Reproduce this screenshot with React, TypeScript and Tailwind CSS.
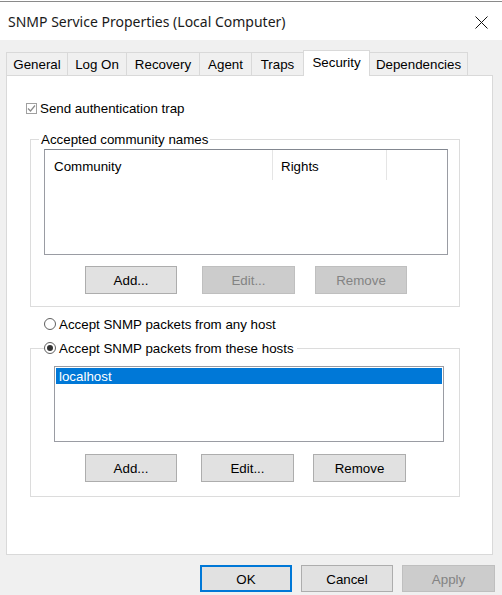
const tabs = [
  { label: "General", w: 62 },
  { label: "Log On", w: 59 },
  { label: "Recovery", w: 73 },
  { label: "Agent", w: 52 },
  { label: "Traps", w: 52 },
  { label: "Security", w: 66, active: true },
  { label: "Dependencies", w: 98 },
];

function Btn({
  label,
  w = 92,
  h = 28,
  disabled,
  primary,
  className = "",
}: {
  label: string;
  w?: number;
  h?: number;
  disabled?: boolean;
  primary?: boolean;
  className?: string;
}) {
  return (
    <div
      className={
        "flex shrink-0 items-center justify-center border pt-[2px] " +
        (disabled
          ? "border-[#bfbfbf] bg-[#cccccc] text-[#838383] "
          : primary
          ? "border-[#0078d7] bg-[#e1e1e1] text-black shadow-[inset_0_0_0_1px_#0078d7] "
          : "border-[#adadad] bg-[#e1e1e1] text-black ") +
        className
      }
      style={{ width: w, height: h }}
    >
      {label}
    </div>
  );
}

function Radio({ checked }: { checked?: boolean }) {
  return (
    <div className="flex h-[12px] w-[12px] items-center justify-center rounded-full border border-[#5f5f5f] bg-white">
      {checked && <div className="h-[6px] w-[6px] rounded-full bg-[#333333]" />}
    </div>
  );
}

export default function App() {
  return (
    <div
      className="h-[595px] w-[502px] overflow-hidden bg-[#f0f0f0] text-[13.33px] leading-none text-black"
      style={{ fontFamily: '"Liberation Sans", Arial, sans-serif' }}
    >
      {/* title bar */}
      <div className="bg-white pt-px">
        <div className="flex h-[39px] items-center justify-between border-t border-[#8a8a8a] pl-[8px] pr-[14px]">
          <span
            className="pt-[1px] text-[14px] text-[#1a1a1a]"
            style={{ fontFamily: '"Noto Sans", "Open Sans", sans-serif' }}
          >
            SNMP Service Properties (Local Computer)
          </span>
          <svg width="13" height="13" viewBox="0 0 13 13" className="mt-[2px]">
            <path d="M0.5 0.5 L12.5 12.5 M12.5 0.5 L0.5 12.5" stroke="#111" strokeWidth="1" />
          </svg>
        </div>
      </div>

      {/* tabs */}
      <div className="flex items-end pl-[6px] pt-[10px]">
        {tabs.map((t, i) => (
          <div
            key={t.label}
            className={
              "flex items-center justify-center border border-b-0 border-[#d9d9d9] " +
              (t.active
                ? "relative z-10 -mb-px h-[26px] bg-white pb-[2px]"
                : "h-[23px] bg-[#f0f0f0] pt-[2px]") +
              (i > 0 ? " -ml-px" : "")
            }
            style={{ width: t.w + (i > 0 ? 1 : 0) }}
          >
            {t.label}
          </div>
        ))}
      </div>

      {/* panel */}
      <div className="ml-[6px] h-[480px] w-[487px] border border-[#d9d9d9] bg-white">
        <div className="ml-[19px] mt-[24px] flex h-[16px] items-center">
          <div className="flex h-[11px] w-[11px] items-center justify-center border border-[#a0a0a0] bg-white">
            <svg width="9" height="9" viewBox="0 0 9 9">
              <path d="M1 4.5 L3.5 7 L8 1.5" fill="none" stroke="#8a8a8a" strokeWidth="1.2" />
            </svg>
          </div>
          <span className="ml-[3px] pt-[2px]">Send authentication trap</span>
        </div>

        {/* community group */}
        <div className="relative ml-[23px] mt-[23px] h-[168px] w-[430px] border border-[#dcdcdc]">
          <span className="absolute left-[8px] top-[-7px] bg-white px-[2px]">Accepted community names</span>
          <div className="ml-[13px] mt-[9px] h-[106px] w-[404px] border border-[#9a9ca3] border-t-[#828790] bg-white">
            <div className="flex h-[30px]">
              <div className="flex w-[228px] items-center border-r border-[#e5e5e5] pl-[9px] pt-[3px]">Community</div>
              <div className="flex w-[114px] items-center border-r border-[#e5e5e5] pl-[8px] pt-[3px]">Rights</div>
            </div>
          </div>
          <div className="ml-[54px] mt-[11px] flex">
            <Btn label="Add..." />
            <Btn label="Edit..." w={93} disabled className="ml-[25px]" />
            <Btn label="Remove" disabled className="ml-[20px]" />
          </div>
        </div>

        <div className="ml-[37px] mt-[9px] flex h-[16px] items-center">
          <Radio />
          <span className="ml-[3px] pt-[2px]">Accept SNMP packets from any host</span>
        </div>

        {/* hosts group */}
        <div className="relative ml-[23px] mt-[16px] h-[149px] w-[430px] border border-[#dcdcdc]">
          <div className="absolute left-[13px] top-[-9px] flex h-[16px] items-center bg-white pr-[3px]">
            <Radio checked />
            <span className="ml-[3px] pt-[2px]">Accept SNMP packets from these hosts</span>
          </div>
          <div className="ml-[23px] mt-[17px] h-[76px] w-[390px] border border-[#9a9ca3] bg-white p-px">
            <div className="flex h-[16px] items-center bg-[#0078d7] pl-[3px] pt-[2px] text-white">localhost</div>
          </div>
          <div className="ml-[54px] mt-[12px] flex">
            <Btn label="Add..." />
            <Btn label="Edit..." w={93} className="ml-[24px]" />
            <Btn label="Remove" w={93} className="ml-[19px]" />
          </div>
        </div>
      </div>

      {/* dialog buttons */}
      <div className="ml-[200px] mt-[10px] flex">
        <Btn label="OK" h={27} primary />
        <Btn label="Cancel" h={27} className="ml-[9px]" />
        <Btn label="Apply" w={93} h={27} disabled className="ml-[9px]" />
      </div>
    </div>
  );
}
